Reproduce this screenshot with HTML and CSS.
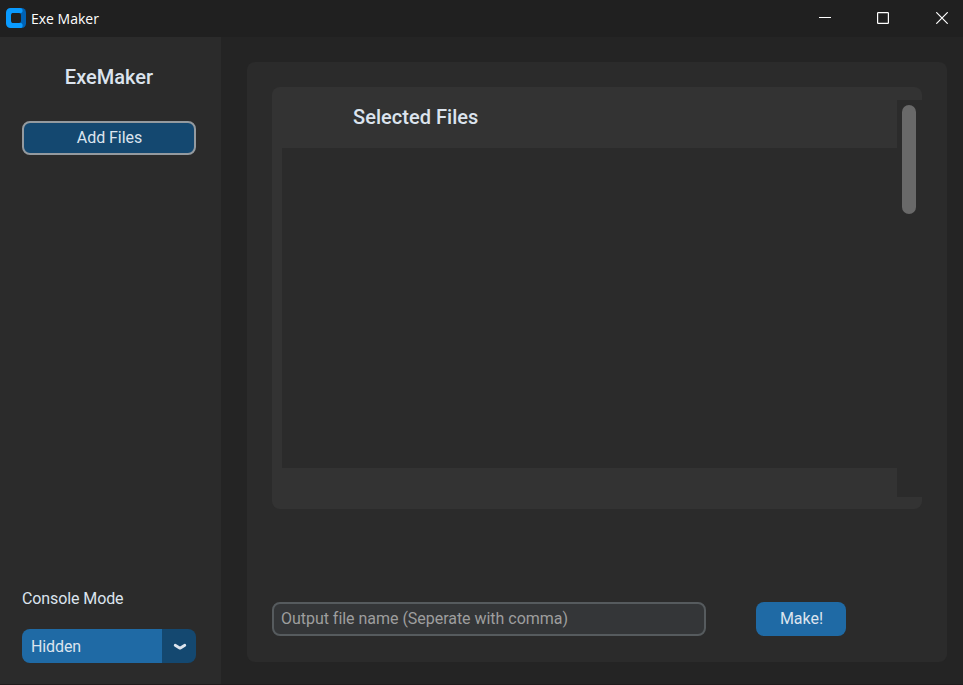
FILE: index.html
```html
<!DOCTYPE html>
<html lang="en">
<head>
<meta charset="utf-8">
<title>Exe Maker</title>
<link rel="stylesheet" href="styles.css">
</head>
<body>
<div class="window">
  <header class="titlebar">
    <svg class="logo" width="20" height="20" viewBox="0 0 20 20">
      <rect x="7" width="13" height="20" rx="4.500" fill="#0062b4"/>
      <path d="M4.500 0H14a2.600 2.600 0 0 1 0 5.200H6V14.800H14a2.600 2.600 0 0 1 0 5.200H4.500A4.500 4.500 0 0 1 0 15.500V4.500A4.500 4.500 0 0 1 4.500 0Z" fill="#0a9bff"/>
      <rect x="5" y="5" width="10" height="10" rx="2" fill="#202020"/>
    </svg>
    <span class="caption">Exe Maker</span>
    <div class="controls">
      <svg width="12" height="12" viewBox="0 0 12 12"><path d="M0 5.500H12" stroke="#fff"/></svg>
      <svg width="12" height="12" viewBox="0 0 12 12"><rect x=".6" y=".6" width="10.800" height="10.800" rx=".6" fill="none" stroke="#fff" stroke-width="1.200"/></svg>
      <svg class="close" width="12" height="12" viewBox="0 0 12 12"><path d="M.3.3 11.700 11.700M11.700.3.3 11.700" stroke="#fff" stroke-width="1.200"/></svg>
    </div>
  </header>
  <div class="content">
    <aside class="sidebar">
      <h1 class="heading">ExeMaker</h1>
      <button class="add">Add Files</button>
      <div class="mode-label">Console Mode</div>
      <div class="select">
        <span class="value">Hidden</span>
        <span class="arrow"><svg width="14" height="8" viewBox="0 0 14 8"><path d="M2.200 2.200 7 5.200 11.800 2.200" fill="none" stroke="#dce4ee" stroke-width="2.800" stroke-linecap="round" stroke-linejoin="round"/></svg></span>
      </div>
    </aside>
    <main class="panel">
      <section class="files">
        <div class="files-main">
          <h2 class="heading">Selected Files</h2>
          <div class="list"></div>
        </div>
        <div class="scrollbar"><div class="thumb"></div></div>
      </section>
      <div class="actions">
        <input class="output" type="text" placeholder="Output file name (Seperate with comma)">
        <button class="make">Make!</button>
      </div>
    </main>
  </div>
</div>
</body>
</html>
```
FILE: styles.css
```css
* { box-sizing: border-box; }
body {
  margin: 0;
  background: #242424;
  color: #dce4ee;
  font: 16px/20px Roboto, sans-serif;
}
button, input { font: inherit; color: inherit; }
.window {
  display: flex;
  flex-direction: column;
  width: 963px;
  height: 685px;
  border-bottom: 1px solid #1f1b1c;
  overflow: hidden;
}
.titlebar {
  display: flex;
  align-items: center;
  height: 37px;
  padding: 0 15px 1px 6px;
  background: #202020;
}
.caption {
  margin-left: 5px;
  padding-top: 1px;
  color: #fff;
  font: 14px/20px "Open Sans", sans-serif;
}
.controls {
  display: flex;
  gap: 46px;
  margin-left: auto;
}
.controls svg { display: block; }
.controls .close { margin-left: 1px; }
.content { display: flex; flex: 1; }
.sidebar {
  display: flex;
  flex-direction: column;
  width: 221px;
  padding: 28px 25px 21px 22px;
  background: #2b2b2b;
}
.heading {
  margin: 0;
  font-size: 20px;
  font-weight: 500;
  line-height: 24px;
  letter-spacing: 0.03px;
}
.sidebar .heading { text-align: center; }
.add {
  height: 34px;
  margin-top: 32px;
  padding: 0 0 0 1px;
  border: 2px solid #949a9f;
  border-radius: 8px;
  background: #144870;
  letter-spacing: -0.05px;
}
.mode-label {
  margin-top: auto;
  letter-spacing: -0.1px;
}
.select {
  display: flex;
  height: 34px;
  margin-top: 20px;
  border-radius: 8px;
  overflow: hidden;
}
.value {
  flex: 1;
  padding: 8px 9px 6px;
  background: #1f6aa5;
  letter-spacing: -0.1px;
}
.arrow {
  display: flex;
  align-items: center;
  justify-content: center;
  width: 34px;
  padding: 2px 0 0 2px;
  background: #144870;
}
.panel {
  width: 700px;
  height: 600px;
  margin: 25px 0 0 26px;
  padding: 25px;
  border-radius: 8px;
  background: #2b2b2b;
}
.files {
  display: flex;
  height: 422px;
  border-radius: 8px;
  background: #333;
}
.files-main {
  flex: 1;
  padding: 18px 0 41px 10px;
}
.files-main .heading { padding-left: 71px; }
.list {
  height: 320px;
  margin-top: 19px;
  background: #2b2b2b;
}
.scrollbar {
  width: 25px;
  height: 397px;
  margin-top: 13px;
  padding: 5px;
  background: #2b2b2b;
}
.thumb {
  width: 14px;
  height: 109px;
  border-radius: 7px;
  background: #696969;
}
.actions {
  display: flex;
  gap: 50px;
  margin-top: 93px;
}
.output {
  width: 434px;
  height: 34px;
  padding: 0 7px 2px;
  border: 2px solid #565b5e;
  border-radius: 8px;
  background: #343638;
  letter-spacing: -0.03px;
}
.output::placeholder { color: #9e9e9e; opacity: 1; }
.make {
  width: 90px;
  height: 34px;
  padding: 0 0 0 1px;
  border: 0;
  border-radius: 8px;
  background: #1f6aa5;
}
```
